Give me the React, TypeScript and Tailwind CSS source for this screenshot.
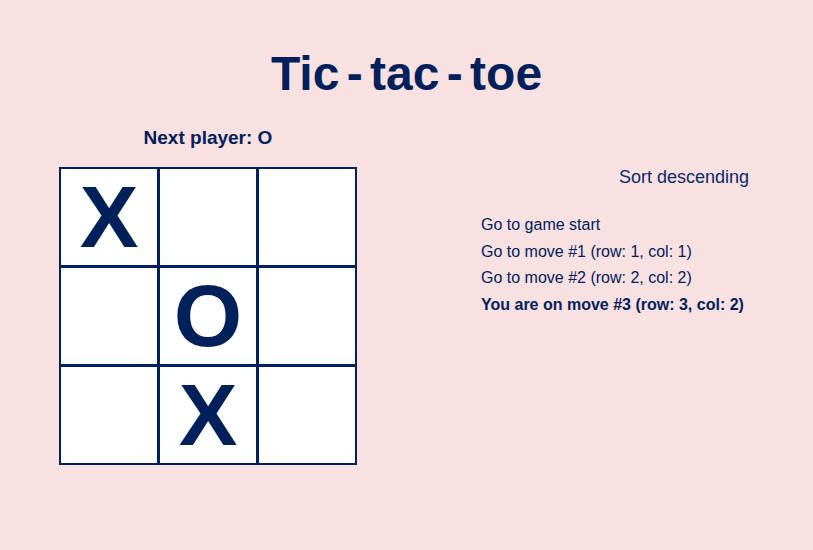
const board = ["X", null, null, null, "O", null, null, "X", null]

const moves = [
  "Go to game start",
  "Go to move #1 (row: 1, col: 1)",
  "Go to move #2 (row: 2, col: 2)",
]

const Square = ({ value }: { value: string | null }) => {
  return (
    <button className="bg-white flex items-center justify-center text-[88px] font-bold leading-none text-[#00205b]">
      {value}
    </button>
  )
}

export default function App() {
  return (
    <div className="min-h-screen w-full bg-[#f9e1e1] text-[#00205b] font-['Liberation_Sans',Arial,sans-serif]">
      <h1 className="pt-[50px] text-center text-[48px] font-bold leading-none [word-spacing:-6px]">
        Tic - tac - toe
      </h1>
      <div className="flex items-start pl-[59px] mt-[30px]">
        <div className="flex flex-col items-center w-[298px]">
          <div className="text-[19px] font-bold leading-none">Next player: O</div>
          <div className="mt-[20px] grid grid-cols-[repeat(3,96px)] grid-rows-[repeat(3,96px)] gap-[3px] p-[2px] bg-[#00205b]">
            {board.map((v, i) => (
              <Square key={i} value={v} />
            ))}
          </div>
        </div>
        <div className="ml-[124px] w-[268px] mt-[40px] flex flex-col">
          <button className="self-end text-[18px] leading-none text-[#0a2a66] cursor-pointer">
            Sort descending
          </button>
          <ol className="mt-[26px] text-[16px] leading-[26.5px]">
            {moves.map((m) => (
              <li key={m}>
                <button className="cursor-pointer">{m}</button>
              </li>
            ))}
            <li className="font-bold">You are on move #3 (row: 3, col: 2)</li>
          </ol>
        </div>
      </div>
    </div>
  )
}
